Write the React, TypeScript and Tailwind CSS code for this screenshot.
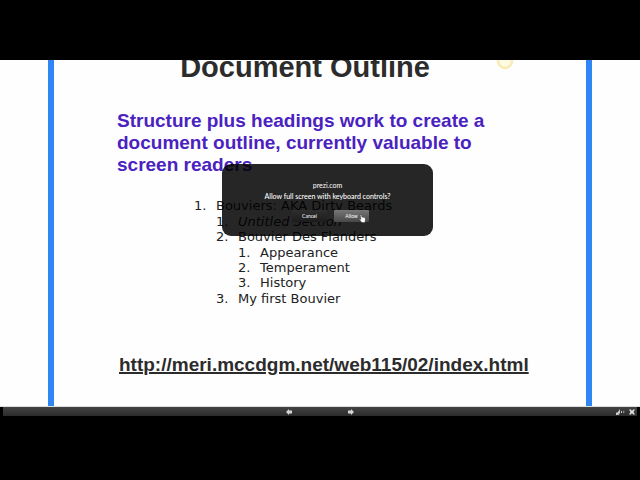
import type { ReactNode } from 'react';

function Item({ n, label, italic, children }: { n: number; label: string; italic?: boolean; children?: ReactNode }) {
  return (
    <li>
      <div className="flex">
        <span className="w-[22px] shrink-0">{n}.</span>
        <span className={italic ? 'italic' : ''}>{label}</span>
      </div>
      {children && <ol className="my-px pl-[22px]">{children}</ol>}
    </li>
  );
}

function Slide() {
  return (
    <main className="relative overflow-hidden border-b border-[#dddddd] bg-[#fefefe] px-12">
      <svg className="absolute top-0 left-[77.5%] h-[10px] w-[18px]" viewBox="0 0 18 10">
        <circle cx="9" cy="1" r="7" fill="#fffbe2" stroke="#f8ebb4" strokeWidth="2.500" />
      </svg>
      <div className="border-x-6 border-[#2f86f6] pb-[30px] pl-[63px] font-['Liberation_Sans',sans-serif] font-bold">
        <div className="max-w-[376px]">
          <h1 className="-mt-[9px] text-center text-[29px] leading-8 text-[#2c2c2c]">Document Outline</h1>
          <p className="mt-[27px] text-[19px] leading-[22px] text-[#4a22c0]">
            Structure plus headings work to create a document outline, currently valuable to screen readers
          </p>
          <ol className="mt-[22px] pl-[77px] font-['DejaVu_Sans',sans-serif] text-[13px] leading-[15px] font-normal text-[#222222]">
            <Item n={1} label="Bouviers: AKA Dirty Beards">
              <Item n={1} label="Untitled Section" italic />
              <Item n={2} label="Bouvier Des Flanders">
                <Item n={1} label="Appearance" />
                <Item n={2} label="Temperament" />
                <Item n={3} label="History" />
              </Item>
              <Item n={3} label="My first Bouvier" />
            </Item>
          </ol>
          <a
            href="http://meri.mccdgm.net/web115/02/index.html"
            className="mt-12 ml-[2px] block text-[19px] leading-[22px] whitespace-nowrap text-[#2c2c2c] underline decoration-2"
          >
            http://meri.mccdgm.net/web115/02/index.html
          </a>
        </div>
      </div>
      <FullScreenPrompt />
    </main>
  );
}

function FullScreenPrompt() {
  return (
    <div
      role="dialog"
      aria-label="Allow full screen"
      className="absolute top-[104px] left-[222px] flex h-[72px] w-[211px] flex-col items-center rounded-[9px] bg-black/85 pt-4 font-[Lato,sans-serif] text-[7px] leading-[11px] text-white"
    >
      <p>prezi.com</p>
      <p className="font-medium">Allow full screen with keyboard controls?</p>
      <div className="mt-2 flex gap-[7px] pl-[6px] text-[5px]">
        <button className="h-3 w-[35px] rounded-[1px] bg-linear-to-b from-[#2e2e2e] to-[#1c1c1c]">Cancel</button>
        <button className="h-3 w-[35px] rounded-[1px] bg-linear-to-b from-[#777777] to-[#484848]">Allow</button>
      </div>
      <svg className="absolute top-[50px] left-[137px] h-[9px] w-[7px]" viewBox="0 0 7 9">
        <path
          d="M1.600.5c.5-.3.9 0 1 .5l.3 2 2.600.6c.7.2 1 .6.9 1.300L6 8.500H2.800L.5 5.600c-.4-.6.2-1 .8-.6l.7.5-.7-4z"
          fill="#fff"
          stroke="#222"
          strokeWidth=".4"
        />
      </svg>
    </div>
  );
}

function Controls() {
  return (
    <nav className="mx-[3px] grid h-[9px] grid-cols-[1fr_auto_1fr] items-center bg-linear-to-b from-[#444444] to-[#2b2b2b]">
      <div className="col-start-2 flex gap-14">
        <button aria-label="Previous">
          <svg className="h-[6px] w-[6px]" viewBox="0 0 6 6" fill="#d6d6d6">
            <path d="M0 3 3 0v1.500h3v3H3V6z" />
          </svg>
        </button>
        <button aria-label="Next">
          <svg className="h-[6px] w-[6px]" viewBox="0 0 6 6" fill="#d6d6d6">
            <path d="M6 3 3 0v1.500H0v3h3V6z" />
          </svg>
        </button>
      </div>
      <div className="flex justify-end gap-1 pr-[2px]">
        <button aria-label="Autoplay">
          <svg className="h-[6px] w-[9px]" viewBox="0 0 9 6" fill="#c8c8c8">
            <path d="M0 3.500h1.500L4 0v4L2.500 6H0zM5 2h1v2H5z" />
            <path d="M7 1.500v3L9 3z" fill="#8a8a8a" />
          </svg>
        </button>
        <button aria-label="Exit full screen">
          <svg className="h-[6px] w-[6px]" viewBox="0 0 6 6" fill="#e0e0e0">
            <path d="M0 .5h2L3 2l1-1.500h2L4.500 3 6 5.500H4L3 4 2 5.500H0L1.500 3z" />
          </svg>
        </button>
      </div>
    </nav>
  );
}

export default function App() {
  return (
    <div className="min-h-screen bg-black pt-[60px]">
      <Slide />
      <Controls />
    </div>
  );
}
